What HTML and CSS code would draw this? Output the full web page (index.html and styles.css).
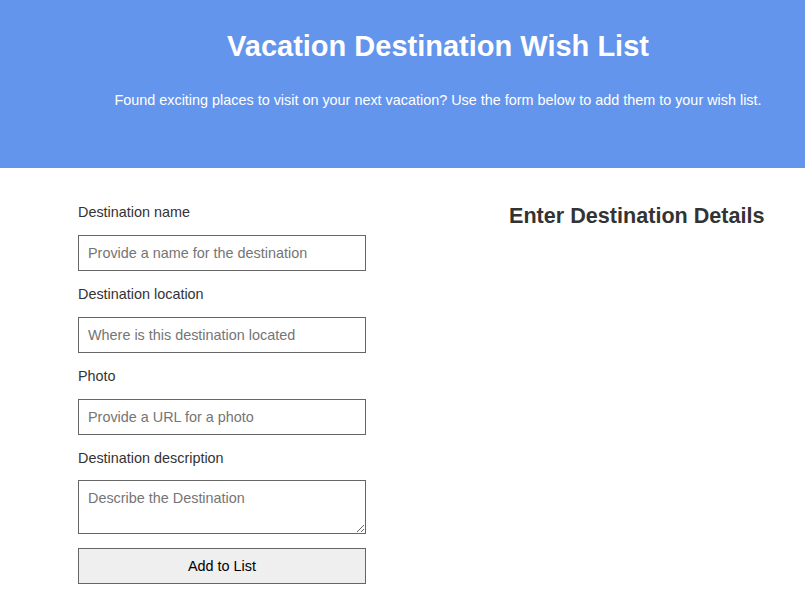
FILE: index.html
```html
<!DOCTYPE html>
<html>
<head>
<meta charset="utf-8">
<link rel="stylesheet" href="styles.css">
</head>
<body>
<header class="banner">
  <h1 class="title">Vacation Destination Wish List</h1>
  <p class="intro">Found exciting places to visit on your next vacation? Use the form below to add them to your wish list.</p>
</header>
<main class="content">
  <form class="form">
    <label class="label" for="name">Destination name</label>
    <input class="field" id="name" type="text" placeholder="Provide a name for the destination">
    <label class="label" for="loc">Destination location</label>
    <input class="field" id="loc" type="text" placeholder="Where is this destination located">
    <label class="label" for="photo">Photo</label>
    <input class="field" id="photo" type="text" placeholder="Provide a URL for a photo">
    <label class="label label-tight" for="desc">Destination description</label>
    <textarea class="field area" id="desc" placeholder="Describe the Destination"></textarea>
    <button class="btn" type="button">Add to List</button>
  </form>
  <section class="details">
    <h2 class="details-title">Enter Destination Details</h2>
  </section>
</main>
</body>
</html>
```
FILE: styles.css
```css
* { box-sizing: border-box; }
body {
  margin: 0;
  font-family: "Liberation Sans", Arial, sans-serif;
  color: #333;
  background: #fff;
}
.banner {
  background: #6495ed;
  height: 168px;
  padding: 28px 0 0 71px;
  color: #fff;
  text-align: center;
}
.title {
  margin: 0;
  font-size: 29px;
  font-weight: bold;
  line-height: 36px;
}
.intro {
  margin: 26px 0 0;
  font-size: 14.4px;
  line-height: 20px;
}
.content {
  display: flex;
  padding: 0 0 0 78px;
}
.form {
  width: 288px;
  display: flex;
  flex-direction: column;
  padding-top: 36px;
}
.label {
  font-size: 14.4px;
  line-height: 16px;
  margin: 0 0 15px;
  color: #333;
}
.label-tight { margin-bottom: 14px; }
.field {
  display: block;
  width: 288px;
  height: 36px;
  border: 1px solid #666;
  padding: 0 9px;
  font-family: "Liberation Sans", Arial, sans-serif;
  font-size: 14.4px;
  color: #333;
  margin: 0 0 15px;
}
.field::placeholder { color: #757575; }
.area {
  height: 54px;
  padding: 9px 9px 8px;
  resize: vertical;
  margin-bottom: 14px;
}
.btn {
  width: 288px;
  height: 36px;
  border: 1px solid #666;
  background: #efefef;
  font-family: "Liberation Sans", Arial, sans-serif;
  font-size: 14.4px;
  color: #000;
}
.details {
  margin-left: 143px;
  padding-top: 35px;
}
.details-title {
  margin: 0;
  font-size: 21.6px;
  line-height: 26px;
  font-weight: bold;
  color: #333;
}
```
